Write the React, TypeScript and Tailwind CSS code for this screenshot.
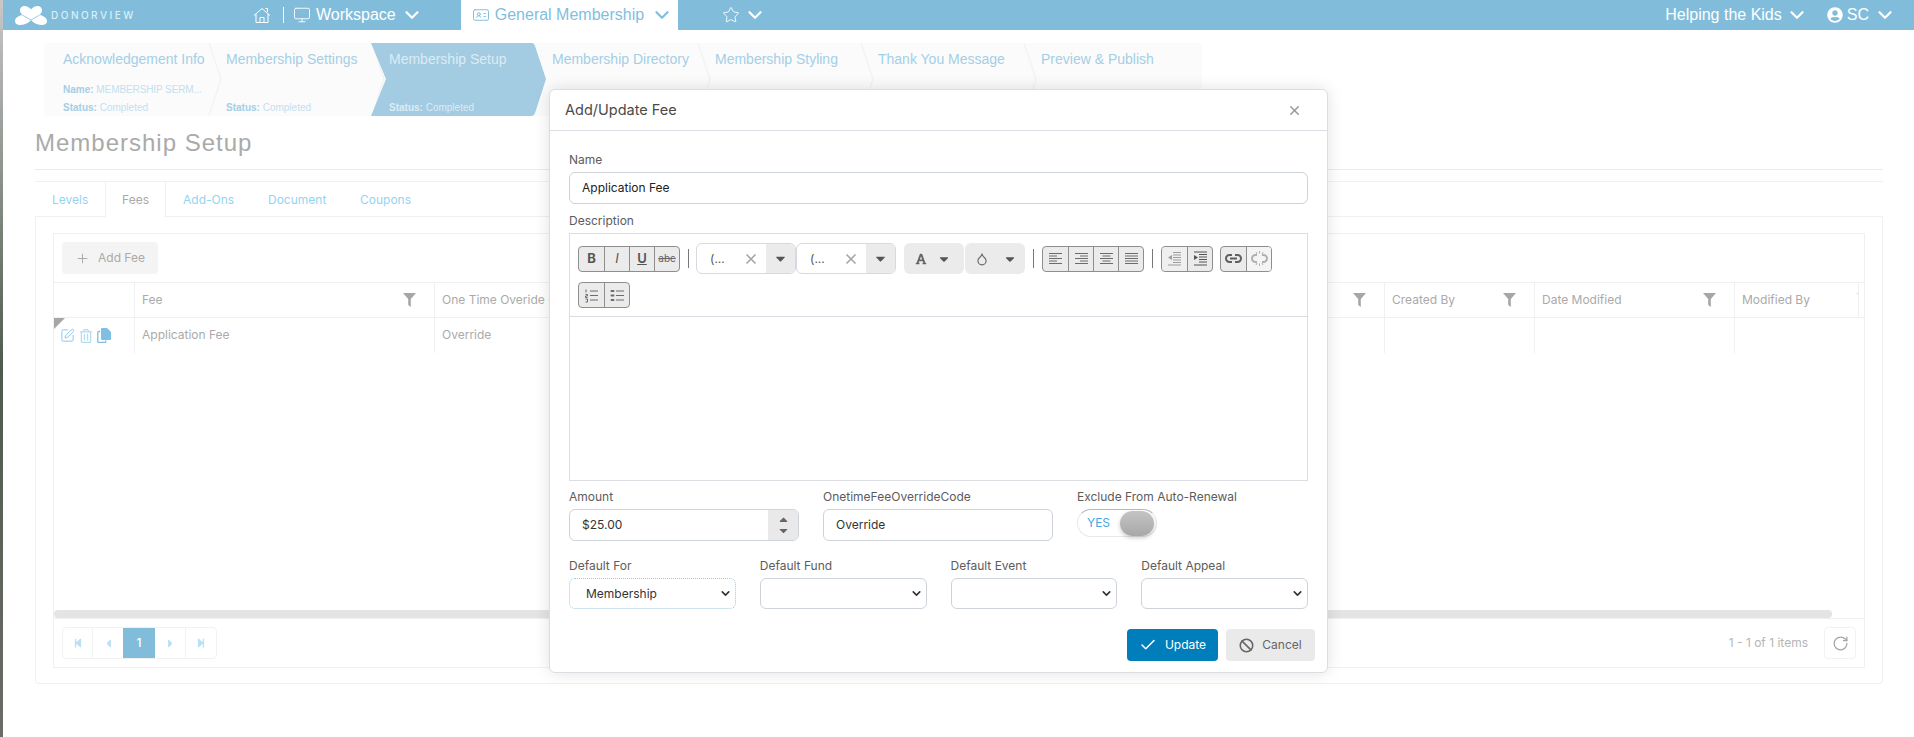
import React from 'react';
import { ChevronDown, Monitor, IdCard, Star, X, Plus, Check, Ban, RotateCw, SquarePen } from 'lucide-react';
import { FaUserCircle, FaStepBackward, FaStepForward, FaCaretLeft, FaCaretRight, FaCaretDown, FaCaretUp, FaFont, FaRegTrashAlt } from 'react-icons/fa';
import { LuDroplet } from 'react-icons/lu';

const font = { fontFamily: 'Inter, Roboto, sans-serif' };
const helv = { fontFamily: '"Liberation Sans", Arial, sans-serif' };

const steps = [
  { title: 'Acknowledgement Info', name: true, status: true },
  { title: 'Membership Settings', status: true },
  { title: 'Membership Setup', status: true, active: true },
  { title: 'Membership Directory' },
  { title: 'Membership Styling' },
  { title: 'Thank You Message' },
  { title: 'Preview & Publish' },
];

const Logo = () => (
  <svg width="32" height="19" viewBox="0 0 32 19" fill="#fff">
    <path d="M9.500 0c2.700 0 4.700 1.300 6.500 3.300C17.800 1.300 19.800 0 22.500 0c2.800 0 4.500 1.800 4.500 4 0 2-1 3.500-2.300 5 3.500.8 7.300 2.800 7.300 6 0 2.600-2.300 4-5.500 4-4.500 0-8.300-2.200-10.500-5-2.200 2.800-6 5-10.500 5C2.300 19 0 17.600 0 15c0-3.200 3.800-5.200 7.300-6C6 7.500 5 6 5 4c0-2.200 1.700-4 4.500-4z" />
    <path d="M7.300 9 16 14 24.700 9" fill="none" stroke="#81bddb" strokeWidth="0.800" />
  </svg>
);

const HomeIcon = () => (
  <svg width="18" height="18" viewBox="0 0 18 18" fill="none" stroke="#fff" strokeWidth="1">
    <path d="M1 9.500 9 2.500l8 7M3 8v8.500h12V8M12.500 2.500h2V6M7 16.500v-5h4v5" />
  </svg>
);

const FilterIcon = ({ className }: { className?: string }) => (
  <svg width="13" height="14" viewBox="0 0 13 14" fill="#a6a6a6" className={`shrink-0 ${className ?? ''}`}>
    <path d="M0 0H13L7.800 6V14L5.200 12V6Z" />
  </svg>
);

const CopyIcon = () => (
  <svg width="14" height="15" viewBox="0 0 14 15" className="text-[#7fc0e2]">
    <path d="M3 3.500H1.800A1 1 0 0 0 .800 4.500v9a1 1 0 0 0 1 1h6a1 1 0 0 0 1-1V12.500" fill="none" stroke="currentColor" strokeWidth="1.300" />
    <path d="M5 0h5l4 4v7a1 1 0 0 1-1 1H5a1 1 0 0 1-1-1V1a1 1 0 0 1 1-1z" fill="currentColor" />
  </svg>
);

const ChainIcon = ({ broken }: { broken?: boolean }) => (
  <svg width="17" height="15" viewBox="0 0 17 15" fill="none" stroke={broken ? '#b0b0b0' : '#5f5f5f'} strokeWidth="2">
    {broken ? (
      <>
        <path d="M6 4H4.500a3.500 3.500 0 0 0 0 7H6M11 4h1.500a3.500 3.500 0 0 1 0 7H11" />
        <path d="M8.500 0v2.500M8.500 12.500V15M5 1l1 2M12 1l-1 2M5 14l1-2M12 14l-1-2" strokeWidth="1" />
      </>
    ) : (
      <>
        <path d="M7 4H4.500a3.500 3.500 0 0 0 0 7H7M10 4h2.500a3.500 3.500 0 0 1 0 7H10M5 7.500h7" />
      </>
    )}
  </svg>
);

const Step = ({ step, isLast, first }: { step: (typeof steps)[number]; isLast: boolean; first: boolean }) => (
  <div className={`relative h-full shrink-0 pl-[18px] pt-[6px] ${first ? 'w-[164px] pl-[19px]' : 'w-[163px]'}`}>
    {step.active ? (
      <svg className="absolute left-0 top-0 h-[73px] w-[176px]" viewBox="0 0 176 73">
        <path d="M0 0H161Q163 0 164 3L175 36 164 70Q163 73 161 73H0L15 36Z" fill="#a3cbe1" />
      </svg>
    ) : (
      !isLast && (
        <svg className="absolute right-[-16px] top-0 h-[73px] w-[16px]" viewBox="0 0 16 73">
          <path d="M1 0 13 36 1 73" fill="none" stroke="#f3f3f3" strokeWidth="1.500" />
        </svg>
      )
    )}
    <div className={`relative whitespace-nowrap text-[14px] leading-[20px] ${step.active ? 'text-[#dcecf5]' : 'text-[#a3cfe6]'}`}>{step.title}</div>
    {step.name && (
      <div className="absolute left-[19px] top-[40px] whitespace-nowrap text-[10px] leading-[14px] text-[#c3e0ef]">
        <b className="text-[#a3cfe6]">Name:</b> <span className="tracking-[-0.1px]">MEMBERSHIP SERM...</span>
      </div>
    )}
    {step.status && (
      <div className={`absolute top-[58px] whitespace-nowrap text-[10px] leading-[14px] ${step.active ? 'text-[#dcecf5]' : 'text-[#c3e0ef]'} ${first ? 'left-[19px]' : 'left-[18px]'}`}>
        <b className={step.active ? '' : 'text-[#a3cfe6]'}>Status:</b> Completed
      </div>
    )}
  </div>
);

const Column = ({ label, width, filter = true }: { label: string; width: string; filter?: boolean }) => (
  <div className={`flex h-full shrink-0 items-center justify-between overflow-hidden border-r border-[#f0f0f0] pl-[7px] pr-[18px] ${width}`}>
    <span className="whitespace-nowrap text-[12px] text-[#aaaaaa]">{label}</span>
    {filter && <FilterIcon />}
  </div>
);

const Lines = ({ d }: { d: string }) => (
  <svg width="15" height="15" viewBox="0 0 15 15" stroke="#6b6b6b" strokeWidth="1" fill="none">
    <path d={d} />
  </svg>
);

const ToolGroup = ({ children }: { children: React.ReactNode }) => (
  <div className="flex h-[26px] overflow-hidden rounded-[4px] border border-[#8e8e8e] bg-[#ebebeb] [&>*]:flex [&>*]:w-[25px] [&>*]:items-center [&>*]:justify-center [&>*+*]:border-l [&>*+*]:border-[#8e8e8e]">
    {children}
  </div>
);

const Sep = () => <div className="mx-[8px] h-[19px] w-px bg-[#777777]" />;

const FontPick = () => (
  <div className="flex h-[31px] w-[100px] overflow-hidden rounded-[6px] border border-[#d6d9df]">
    <div className="flex flex-1 items-center justify-between pl-[13px] pr-[7px] text-[12px] text-[#555555]">
      <span>(...</span>
      <X size={16} strokeWidth={2.500} className="text-[#a6a6a6]" />
    </div>
    <div className="flex w-[29px] items-center justify-center bg-[#ebebeb]">
      <FaCaretDown size={15} className="text-[#555555]" />
    </div>
  </div>
);

const Field = ({ label, children }: { label: string; children: React.ReactNode }) => (
  <div>
    <div className="mb-[4px] h-[16px] text-[12px] leading-[16px] text-[#5c5c5c]">{label}</div>
    {children}
  </div>
);

const Pick = ({ value, focus }: { value?: string; focus?: boolean }) => (
  <div className={`flex h-[31px] items-center justify-between rounded-[6px] border pl-[16px] pr-[3px] text-[12px] text-[#333333] ${focus ? 'border-dotted border-[#8fcdea]' : 'border-[#ced2d9]'}`}>
    <span>{value}</span>
    <ChevronDown size={13} strokeWidth={3} className="text-[#333333]" />
  </div>
);

const Modal = () => (
  <div className="absolute left-[549px] top-[89px] h-[584px] w-[779px] rounded-[6px] border border-[#dcdde2] bg-white shadow-[0_0_16px_rgba(0,0,0,0.12)]">
    <div className="flex h-[41px] items-center justify-between border-b border-[#dcdde2] pl-[15px] pr-[25px]">
      <span className="text-[14.500px] text-[#4a4a4a]">Add/Update Fee</span>
      <X size={15} strokeWidth={2.500} className="text-[#9b9b9b]" />
    </div>
    <div className="px-[19px] pt-[21px]">
      <Field label="Name">
        <div className="flex h-[32px] items-center rounded-[6px] border border-[#ced2d9] pl-[12px] text-[12px] text-[#222222]">Application Fee</div>
      </Field>
      <div className="mt-[9px]">
        <Field label="Description">
          <div className="h-[248px] border border-[#dcdde2]">
            <div className="h-[83px] border-b border-[#dcdde2] pl-[8px] pt-[9px]">
              <div className="flex h-[31px] items-center">
                <ToolGroup>
                  <span className="text-[13px] font-bold text-[#555555]">B</span>
                  <span className="text-[13px] italic text-[#555555]">I</span>
                  <span className="text-[13px] font-semibold text-[#555555] underline">U</span>
                  <span className="text-[10px] text-[#666666] line-through">abc</span>
                </ToolGroup>
                <div className="ml-[8px] mr-[7px] h-[19px] w-px bg-[#777777]" />
                <FontPick />
                <FontPick />
                <div className="ml-[8px] flex h-[31px] w-[60px] items-center justify-between rounded-[6px] bg-[#ebebeb] pl-[11px] pr-[13px]">
                  <FaFont size={12} className="text-[#666666]" />
                  <FaCaretDown size={14} className="text-[#555555]" />
                </div>
                <div className="ml-[1px] flex h-[31px] w-[60px] items-center justify-between rounded-[6px] bg-[#ebebeb] pl-[10px] pr-[8px]">
                  <LuDroplet size={14} className="text-[#666666]" />
                  <FaCaretDown size={14} className="text-[#555555]" />
                </div>
                <Sep />
                <ToolGroup>
                  <span><Lines d="M1 2.500h13M1 5h8M1 7.500h13M1 10h8M1 12.500h13" /></span>
                  <span><Lines d="M1 2.500h13M6 5h8M1 7.500h13M6 10h8M1 12.500h13" /></span>
                  <span><Lines d="M1 2.500h13M3.500 5h8M1 7.500h13M3.500 10h8M1 12.500h13" /></span>
                  <span><Lines d="M1 2.500h13M1 5h13M1 7.500h13M1 10h13M1 12.500h13" /></span>
                </ToolGroup>
                <Sep />
                <ToolGroup>
                  <span className="bg-[#f2f2f2] opacity-60">
                    <svg width="15" height="15" viewBox="0 0 15 15" stroke="#6b6b6b" fill="none">
                      <path d="M6 1.500h8M6 4h8M6 6.500h8M6 9h8M6 11.500h8M1 14h13" />
                      <path d="M5 4v5L1 6.500z" fill="#6b6b6b" stroke="none" />
                    </svg>
                  </span>
                  <span>
                    <svg width="15" height="15" viewBox="0 0 15 15" stroke="#555555" fill="none">
                      <path d="M1 1h13M6 3.500h8M6 6h8M6 8.500h8M6 11h8M1 14h13" />
                      <path d="M1 4v5l4-2.500z" fill="#555555" stroke="none" />
                    </svg>
                  </span>
                </ToolGroup>
                <div className="ml-[7px]">
                  <ToolGroup>
                    <span><ChainIcon /></span>
                    <span className="bg-[#f4f4f4]"><ChainIcon broken /></span>
                  </ToolGroup>
                </div>
              </div>
              <div className="mt-[8px] flex">
                <ToolGroup>
                  <span><Lines d="M6 3h8M6 7.500h8M6 12h8M2 1.500v3M1.500 6.500h2v1.500h-2v1.500h2M1.500 11h2v3h-2" /></span>
                  <span>
                    <svg width="15" height="15" viewBox="0 0 15 15" stroke="#6b6b6b" fill="none">
                      <path d="M6 3h8M6 7.500h8M6 12h8" />
                      <path d="M1.500 3h2M1.500 7.500h2M1.500 12h2" strokeWidth="2" strokeLinecap="round" />
                    </svg>
                  </span>
                </ToolGroup>
              </div>
            </div>
          </div>
        </Field>
      </div>
      <div className="mt-[8px] grid grid-cols-[230px_230px_1fr] gap-x-[24px]">
        <Field label="Amount">
          <div className="flex h-[32px] overflow-hidden rounded-[6px] border border-[#ced2d9]">
            <div className="flex flex-1 items-center pl-[12px] text-[12px] text-[#333333]">$25.00</div>
            <div className="flex w-[30px] flex-col items-center justify-center bg-[#e9e9e9] text-[#666666]">
              <FaCaretUp size={13} className="-mb-[1px]" />
              <FaCaretDown size={13} className="-mt-[1px]" />
            </div>
          </div>
        </Field>
        <Field label="OnetimeFeeOverrideCode">
          <div className="flex h-[32px] items-center rounded-[6px] border border-[#ced2d9] pl-[12px] text-[12px] text-[#333333]">Override</div>
        </Field>
        <Field label="Exclude From Auto-Renewal">
          <div className="mt-[4px] flex h-[28px] w-[80px] items-center justify-between rounded-full border border-[#e8e8e8] border-t-[#b9b9b9] bg-white pl-[9px] pr-[2px]">
            <span className="text-[12px] text-[#41a7e6]">YES</span>
            <div className="h-[25px] w-[34px] rounded-full bg-gradient-to-b from-[#c4c4c4] to-[#a8a8a8] shadow-[0_2px_4px_rgba(0,0,0,0.2)]" />
          </div>
        </Field>
      </div>
      <div className="mt-[17px] grid grid-cols-4 gap-x-[24px]">
        <Field label="Default For"><Pick value="Membership" focus /></Field>
        <Field label="Default Fund"><Pick /></Field>
        <Field label="Default Event"><Pick /></Field>
        <Field label="Default Appeal"><Pick /></Field>
      </div>
    </div>
    <div className="mt-[20px] flex justify-end gap-[8px] pr-[12px]">
      <div className="flex h-[32px] w-[91px] items-center justify-center gap-[8px] rounded-[4px] bg-[#007ebb] text-[12px] text-white">
        <Check size={18} strokeWidth={2} /> Update
      </div>
      <div className="flex h-[32px] w-[89px] items-center justify-center gap-[8px] rounded-[4px] bg-[#eaeaea] text-[12px] text-[#666666]">
        <Ban size={15} strokeWidth={2.500} /> Cancel
      </div>
    </div>
  </div>
);

const App = () => {
  return (
    <div className="relative h-[737px] w-[1914px] overflow-hidden bg-white" style={font}>
      <div className="flex h-full">
        <div className="w-[3px] shrink-0 bg-gradient-to-b from-[#c8c8c8] via-[#4f5a4e] to-[#6b6b68]" />
        <div className="min-w-0 flex-1">
          {/* top nav */}
          <div className="flex h-[30px] items-center bg-[#81bddb] text-[16px] text-white" style={helv}>
            <div className="ml-[12px] flex w-[238px] shrink-0 items-center gap-[4px]">
              <Logo />
              <span className="text-[10px] font-medium tracking-[2.500px] text-[#dcedf6]" style={font}>DONORVIEW</span>
            </div>
            <HomeIcon />
            <div className="ml-[12px] mr-[9px] h-[16px] w-px bg-white" />
            <Monitor size={18} strokeWidth={1.200} />
            <span className="ml-[5px]">Workspace</span>
            <ChevronDown size={22} strokeWidth={2.500} className="ml-[5px]" />
            <div className="ml-[38px] flex h-full w-[217px] items-center bg-white pl-[11px] text-[#7fc0de]">
              <IdCard size={18} strokeWidth={1.300} />
              <span className="ml-[5px] whitespace-nowrap">General Membership</span>
              <ChevronDown size={22} strokeWidth={2.500} className="ml-[7px]" />
            </div>
            <Star size={18} strokeWidth={1.200} className="ml-[44px]" />
            <ChevronDown size={22} strokeWidth={2.500} className="ml-[4px]" />
            <div className="ml-auto flex items-center pr-[18px]">
              <span>Helping the Kids</span>
              <ChevronDown size={22} strokeWidth={2.500} className="ml-[4px]" />
              <FaUserCircle size={16} className="ml-[19px]" />
              <span className="ml-[4px]">SC</span>
              <ChevronDown size={22} strokeWidth={2.500} className="ml-[5px]" />
            </div>
          </div>

          {/* steps */}
          <div className="ml-[41px] mt-[13px] flex h-[73px] w-[1158px] overflow-hidden rounded-[4px] bg-[#fbfbfb]" style={helv}>
            {steps.map((s, i) => (
              <Step key={s.title} step={s} first={i === 0} isLast={i === steps.length - 1} />
            ))}
          </div>

          <div className="ml-[32px] mr-[31px]">
            <h1 className="mt-[12px] h-[41px] text-[24px] leading-[30px] tracking-[1px] text-[#aaaaaa]" style={helv}>Membership Setup</h1>
            <div className="border-t border-[#ececec]" />

            {/* tabs */}
            <div className="mt-[11px] flex h-[36px] border-t border-[#f0f0f0] pl-[17px] text-[12px] text-[#96d3ee]">
              <div className="flex w-[53px] items-center">Levels</div>
              <div className="relative z-10 flex h-[36px] w-[61px] items-center justify-center border-x border-b border-x-[#f0f0f0] border-b-white bg-white text-[#aaaaaa]">Fees</div>
              <div className="ml-[17px] flex w-[85px] items-center">Add-Ons</div>
              <div className="flex w-[92px] items-center">Document</div>
              <div className="flex items-center">Coupons</div>
            </div>

            {/* grid panel */}
            <div className="-mt-px h-[468px] rounded-b-[4px] border border-[#f0f0f0] px-[17px] pt-[16px]">
              <div className="flex h-[435px] flex-col border border-[#f0f0f0]">
                <div className="flex h-[49px] items-center border-b border-[#f0f0f0] pl-[8px]">
                  <div className="flex h-[32px] w-[96px] items-center gap-[8px] rounded-[4px] bg-[#f4f4f4] pl-[13px] text-[12px] text-[#aaaaaa]">
                    <Plus size={15} strokeWidth={1.500} className="text-[#a6a6a6]" /> Add Fee
                  </div>
                </div>
                <div className="flex h-[35px] items-center border-b border-[#f0f0f0]">
                  <Column label="" width="w-[81px]" filter={false} />
                  <Column label="Fee" width="w-[300px]" />
                  <Column label="One Time Overide Code" width="w-[800px]" />
                  <Column label="" width="w-[150px]" />
                  <Column label="Created By" width="w-[150px]" />
                  <Column label="Date Modified" width="w-[200px]" />
                  <div className="flex h-full w-[124px] items-center overflow-hidden border-r border-[#f0f0f0] pl-[7px] text-[12px] text-[#aaaaaa] whitespace-nowrap">
                    Modified By
                    <FilterIcon className="ml-[47px]" />
                  </div>
                </div>
                <div className="flex h-[35px] items-center">
                  <div className="relative flex h-full w-[81px] shrink-0 items-center gap-[4px] border-r border-[#f0f0f0] pl-[6px] text-[#86c4e4]">
                    <div className="absolute left-0 top-0 h-0 w-0 border-r-[11px] border-t-[11px] border-r-transparent border-t-[#a6a6a6]" />
                    <SquarePen size={15} strokeWidth={1.500} />
                    <FaRegTrashAlt size={14} className="text-[#b5dcef]" />
                    <CopyIcon />
                  </div>
                  <div className="flex h-full w-[300px] shrink-0 items-center border-r border-[#f0f0f0] pb-[2px] pl-[7px] text-[12px] text-[#aaaaaa]">Application Fee</div>
                  <div className="flex h-full w-[800px] shrink-0 items-center border-r border-[#f0f0f0] pb-[2px] pl-[7px] text-[12px] text-[#aaaaaa]">Override</div>
                  <div className="h-full w-[150px] shrink-0 border-r border-[#f0f0f0]" />
                  <div className="h-full w-[150px] shrink-0 border-r border-[#f0f0f0]" />
                  <div className="h-full w-[200px] shrink-0 border-r border-[#f0f0f0]" />
                </div>
                <div className="flex-1" />
                <div className="h-[8px] w-[1778px] rounded-full bg-[#e4e4e4]" />
                <div className="flex h-[49px] items-center justify-between border-t border-[#f0f0f0] pl-[8px] pr-[8px]">
                  <div className="flex h-[32px] overflow-hidden rounded-[4px] border border-[#f2f2f2] text-[#b9e1f3]">
                    <div className="flex w-[30px] items-center justify-center border-r border-[#f2f2f2]"><FaStepBackward size={10} /></div>
                    <div className="flex w-[30px] items-center justify-center"><FaCaretLeft size={13} /></div>
                    <div className="flex w-[32px] items-center justify-center bg-[#81bddb] text-[12px] font-medium text-white">1</div>
                    <div className="flex w-[31px] items-center justify-center border-r border-[#f2f2f2]"><FaCaretRight size={13} /></div>
                    <div className="flex w-[30px] items-center justify-center"><FaStepForward size={10} /></div>
                  </div>
                  <div className="flex items-center gap-[16px]">
                    <span className="text-[12px] text-[#b5b5b5]">1 - 1 of 1 items</span>
                    <div className="flex h-[32px] w-[32px] items-center justify-center rounded-[4px] border border-[#f2f2f2]">
                      <RotateCw size={17} strokeWidth={1.800} className="text-[#a6a6a6]" />
                    </div>
                  </div>
                </div>
              </div>
            </div>
          </div>
        </div>
      </div>
      <Modal />
    </div>
  );
};

export default App;
